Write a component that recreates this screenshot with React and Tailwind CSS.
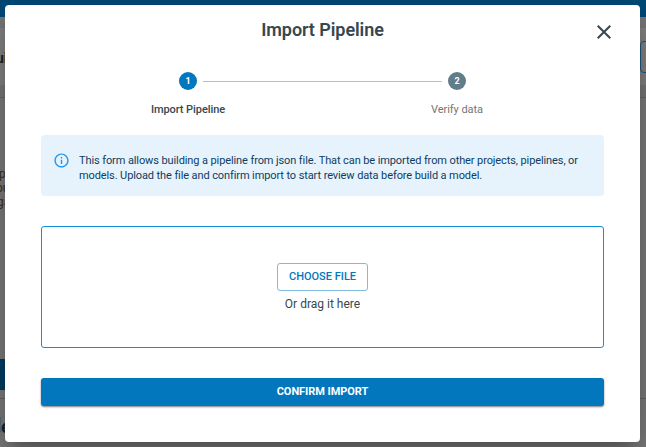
function PageBehind() {
  return (
    <div className="flex h-full flex-col bg-[#7d7d7d] text-[#1b2429]">
      <div className="h-[17px] shrink-0 bg-[#004a78]" />
      <div className="h-[11px] shrink-0 bg-[#7a7a7a]" />
      <div className="flex h-[57px] shrink-0 justify-between overflow-hidden bg-[#848484]">
        <span className="-ml-[4px] mt-[20px] text-[14px] font-bold leading-[20px]">ui</span>
        <div className="-mr-[6px] mt-[13px] h-[32px] w-[12px] rounded-[4px] border border-[#1f5a82]" />
      </div>
      <div className="h-[13px] shrink-0 border-b border-[#686868] bg-[#7a7a7a]" />
      <div className="h-[261px] shrink-0 overflow-hidden pt-[69px] text-[12px] leading-[14px] text-[#3a3026]">
        <div className="-ml-[1px]">p</div>
        <div className="-ml-[4px]">ou</div>
        <div className="-ml-[3px]">ga</div>
      </div>
      <div className="h-[31px] w-[30px] shrink-0 bg-[#003e63]" />
      <div className="h-[9px] shrink-0 border-b border-[#686868]" />
      <div className="flex grow overflow-hidden pt-[18px]">
        <span className="h-[15px] w-px bg-[#55717f]" />
        <span className="text-[18px] font-bold leading-[20px]">e</span>
      </div>
    </div>
  );
}

function Step({ number, label, active }) {
  return (
    <div className="flex w-[90px] flex-col items-center">
      <span
        className={
          "flex size-[18px] items-center justify-center rounded-full text-[9px] font-bold leading-none text-white " +
          (active ? "bg-[#0277bd]" : "bg-[#607d8b]")
        }
      >
        {number}
      </span>
      <span
        className={
          "mt-[12px] whitespace-nowrap text-[11px] leading-[16px] tracking-[-0.07px] " +
          (active ? "font-medium text-[#37474f]" : "text-[#757575]")
        }
      >
        {label}
      </span>
    </div>
  );
}

function ImportDialog() {
  return (
    <div className="absolute left-[5px] top-[5px] flex h-[437px] w-[635px] flex-col rounded-[4px] bg-white px-[36px] shadow-[0_11px_15px_-7px_rgba(0,0,0,0.2),0_24px_38px_3px_rgba(0,0,0,0.14),0_9px_46px_8px_rgba(0,0,0,0.12)]">
      <header className="grid h-[50px] shrink-0 grid-cols-[1fr_auto_1fr]">
        <h1 className="col-start-2 mt-[13px] text-[18px] font-semibold leading-[24px] tracking-[-0.07px] text-[#37474f]">
          Import Pipeline
        </h1>
        <button aria-label="Close" className="-mr-[7px] mt-[20px] size-[14px] justify-self-end">
          <svg viewBox="0 0 14 14" className="size-[14px]" fill="none" stroke="#37474f" strokeWidth="2">
            <path d="M0.7 0.7 13.3 13.3M13.3 0.7 0.7 13.3" />
          </svg>
        </button>
      </header>

      <div className="mt-[17px] flex shrink-0 px-[102px]">
        <Step number="1" label="Import Pipeline" active />
        <div className="-mx-[30px] mt-[9px] h-px grow bg-[#bdbdbd]" />
        <Step number="2" label="Verify data" />
      </div>

      <div className="mt-[17px] flex h-[61px] w-[563px] shrink-0 rounded-[4px] bg-[#e6f3fd] pl-[12px] pt-[17px]">
        <svg viewBox="0 0 24 24" className="size-[17px] shrink-0" fill="#2196f3">
          <path d="M11 7h2v2h-2zM11 11h2v6h-2zM12 2C6.48 2 2 6.48 2 12s4.48 10 10 10 10-4.48 10-10S17.52 2 12 2zm0 18c-4.41 0-8-3.59-8-8s3.59-8 8-8 8 3.59 8 8-3.59 8-8 8z" />
        </svg>
        <p className="ml-[9px] mt-px whitespace-nowrap text-[11px] leading-[15px] tracking-[-0.102px] text-[#0d3c61]">
          This form allows building a pipeline from json file. That can be imported from other projects, pipelines, or
          <br />
          models. Upload the file and confirm import to start review data before build a model.
        </p>
      </div>

      <div className="mt-[30px] flex h-[122px] w-[563px] shrink-0 flex-col items-center rounded-[3px] border border-[#0e91d8] pt-[36px]">
        <button className="h-[28px] w-[91px] rounded-[3px] border border-[#80bbde] text-[11px] font-medium leading-[26px] text-[#0277bd]">
          CHOOSE FILE
        </button>
        <span className="mt-[5px] text-[12px] leading-[16px] text-[#37474f]">Or drag it here</span>
      </div>

      <button className="mt-[30px] h-[28px] w-[563px] shrink-0 rounded-[3px] bg-[#0277bd] text-[11px] font-bold leading-[26px] tracking-[-0.05px] text-white shadow-[0_1px_2px_rgba(0,0,0,0.5)]">
        CONFIRM IMPORT
      </button>
    </div>
  );
}

export default function App() {
  return (
    <div className="relative h-[447px] w-[646px] overflow-hidden font-['Roboto',sans-serif]">
      <PageBehind />
      <ImportDialog />
    </div>
  );
}
